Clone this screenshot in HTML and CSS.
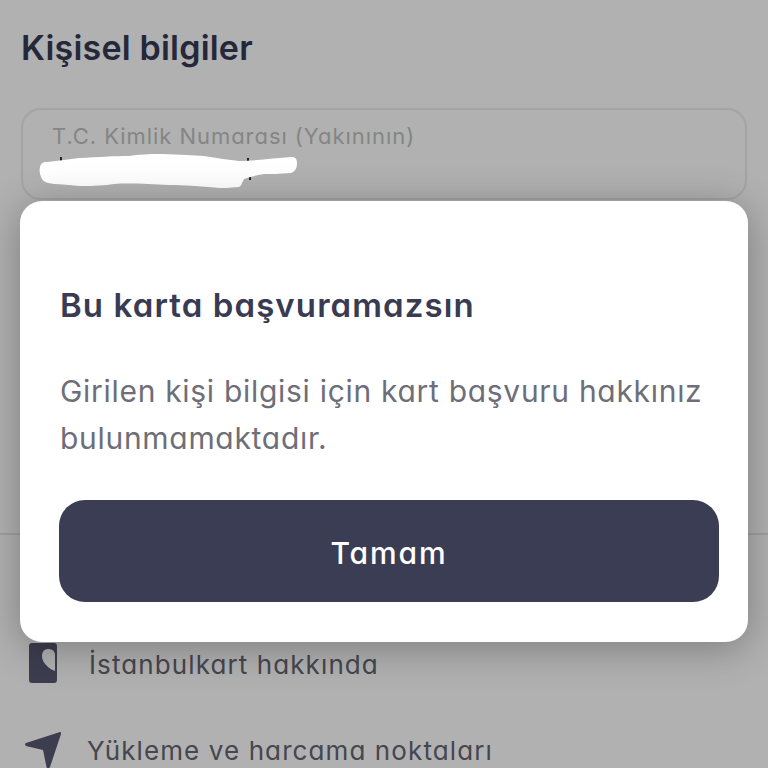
FILE: index.html
```html
<!DOCTYPE html>
<html lang="tr">
<head>
<meta charset="utf-8">
<title>Kişisel bilgiler</title>
<link rel="stylesheet" href="styles.css">
</head>
<body>
<main class="page">
  <h1 class="title">Kişisel bilgiler</h1>
  <div class="field">
    <div class="field-label">T.C. Kimlik Numarası (Yakınının)</div>
    <svg class="redact" viewBox="0 0 260 42" width="260" height="42" aria-hidden="true">
      <rect x="21" y="8" width="2" height="5" fill="#222"/>
      <rect x="208" y="9" width="2" height="5" fill="#222"/>
      <rect x="210" y="26" width="2" height="5" fill="#222"/>
      <path fill="#fff" d="M1 18 C2 14 4 13 8 13 C20 12 30 10 40 9 C60 8 75 7 90 7 C105 5 115 5 125 5 C140 6 155 6 165 7 C178 9 190 11 200 12 C215 12 235 9 253 8 C257 8 258 11 258 14 C258 18 257 22 252 24 C240 25 232 25 225 25 C215 27 210 28 205 30 C203 34 202 37 200 38 C190 39 185 39 180 39 C160 37 145 36 130 36 C110 35 90 34 75 35 C60 37 50 37 40 37 C30 36 22 35 15 35 C8 34 5 33 3 30 C1 26 0 22 1 18 Z"/>
    </svg>
  </div>
  <div class="spacer"></div>
  <ul class="menu">
    <li class="menu-item item-card">
      <svg class="icon icon-card" viewBox="0 0 28 40" width="28" height="40" aria-hidden="true">
        <path fill="#3c3e50" fill-rule="evenodd" d="M3 0 H25 C27 0 28 1 28 3 V37 C28 39 27 40 25 40 H3 C1 40 0 39 0 37 V3 C0 1 1 0 3 0 Z M19 6 C15 6 13 9 13 13 C13 17 15 20 18 23 C20 25 23 27 26 28 V12 C26 8 23 6 19 6 Z"/>
      </svg>
      <span>İstanbulkart hakkında</span>
    </li>
    <li class="menu-item item-nav">
      <svg class="icon" viewBox="0 0 36 36" width="36" height="36" aria-hidden="true">
        <path fill="#3c3e50" d="M35 0 C36 0 36.5 1 36 2 L25 35 Q23 38 21.5 35 L18 18 L1 14 Q-1 12 1 11 Z"/>
      </svg>
      <span>Yükleme ve harcama noktaları</span>
    </li>
  </ul>
</main>
<section class="modal">
  <h2 class="modal-title">Bu karta başvuramazsın</h2>
  <p class="modal-text">Girilen kişi bilgisi için kart başvuru hakkınız bulunmamaktadır.</p>
  <button class="modal-button" type="button">Tamam</button>
</section>
</body>
</html>
```
FILE: styles.css
```css
* { box-sizing: border-box; }
html, body { margin: 0; height: 100%; }
body {
  width: 768px;
  height: 768px;
  overflow: hidden;
  position: relative;
  background: #b1b1b1;
  font-family: Inter, "Noto Sans", sans-serif;
  font-feature-settings: "cv11" 1;
}
.page {
  height: 768px;
  padding: 26px 21px 0;
  display: flex;
  flex-direction: column;
}
.page > * { flex: none; }
.title {
  margin: 0;
  font-size: 34px;
  line-height: 44px;
  font-weight: 600;
  letter-spacing: 0.2px;
  color: #25273a;
}
.field {
  margin-top: 38px;
  height: 92px;
  border: 2px solid #a4a4a4;
  border-radius: 20px;
  padding: 11px 30px 0 16px;
  display: flex;
  flex-direction: column;
}
.field-label {
  font-size: 22px;
  line-height: 30px;
  color: #858585;
  padding-left: 13px;
  letter-spacing: 0.95px;
}
.redact { display: block; flex: none; margin-top: -2px; }
.spacer {
  height: 335px;
  border-bottom: 2px solid #a0a0a0;
  margin: 0 -21px;
}
.menu { list-style: none; margin: 0; padding: 0; }
.menu-item {
  display: flex;
  align-items: center;
  font-size: 26px;
  color: #45464f;
  letter-spacing: 1.1px;
}
.item-card { margin-top: 99px; padding-left: 8px; gap: 32px; height: 60px; }
.item-nav { margin-top: 34px; padding-left: 4px; gap: 26px; height: 44px; }
.icon { flex: none; display: block; }
.icon-card { margin-top: -3px; }
.modal {
  position: absolute;
  left: 20px;
  top: 201px;
  width: 728px;
  height: 441px;
  padding: 82px 29px 0 39px;
  background: #fff;
  border-radius: 22px;
  box-shadow: 0 6px 40px rgba(0, 0, 0, 0.3);
  display: flex;
  flex-direction: column;
}
.modal-title {
  margin: 0;
  padding: 0 0 0 1px;
  font-size: 33px;
  line-height: 44px;
  font-weight: 600;
  color: #383b52;
  letter-spacing: 1.1px;
}
.modal-text {
  margin: 41px 0 0;
  padding-left: 1px;
  font-size: 30px;
  line-height: 47px;
  color: #6d6e78;
  letter-spacing: 0.7px;
}
.modal-button {
  margin-top: 38px;
  width: 660px;
  height: 102px;
  padding: 4px 0 0;
  border: 0;
  border-radius: 26px;
  background: #3a3d54;
  color: #fff;
  font-family: inherit;
  font-feature-settings: inherit;
  font-size: 30px;
  font-weight: 500;
  letter-spacing: 1.9px;
}
```
